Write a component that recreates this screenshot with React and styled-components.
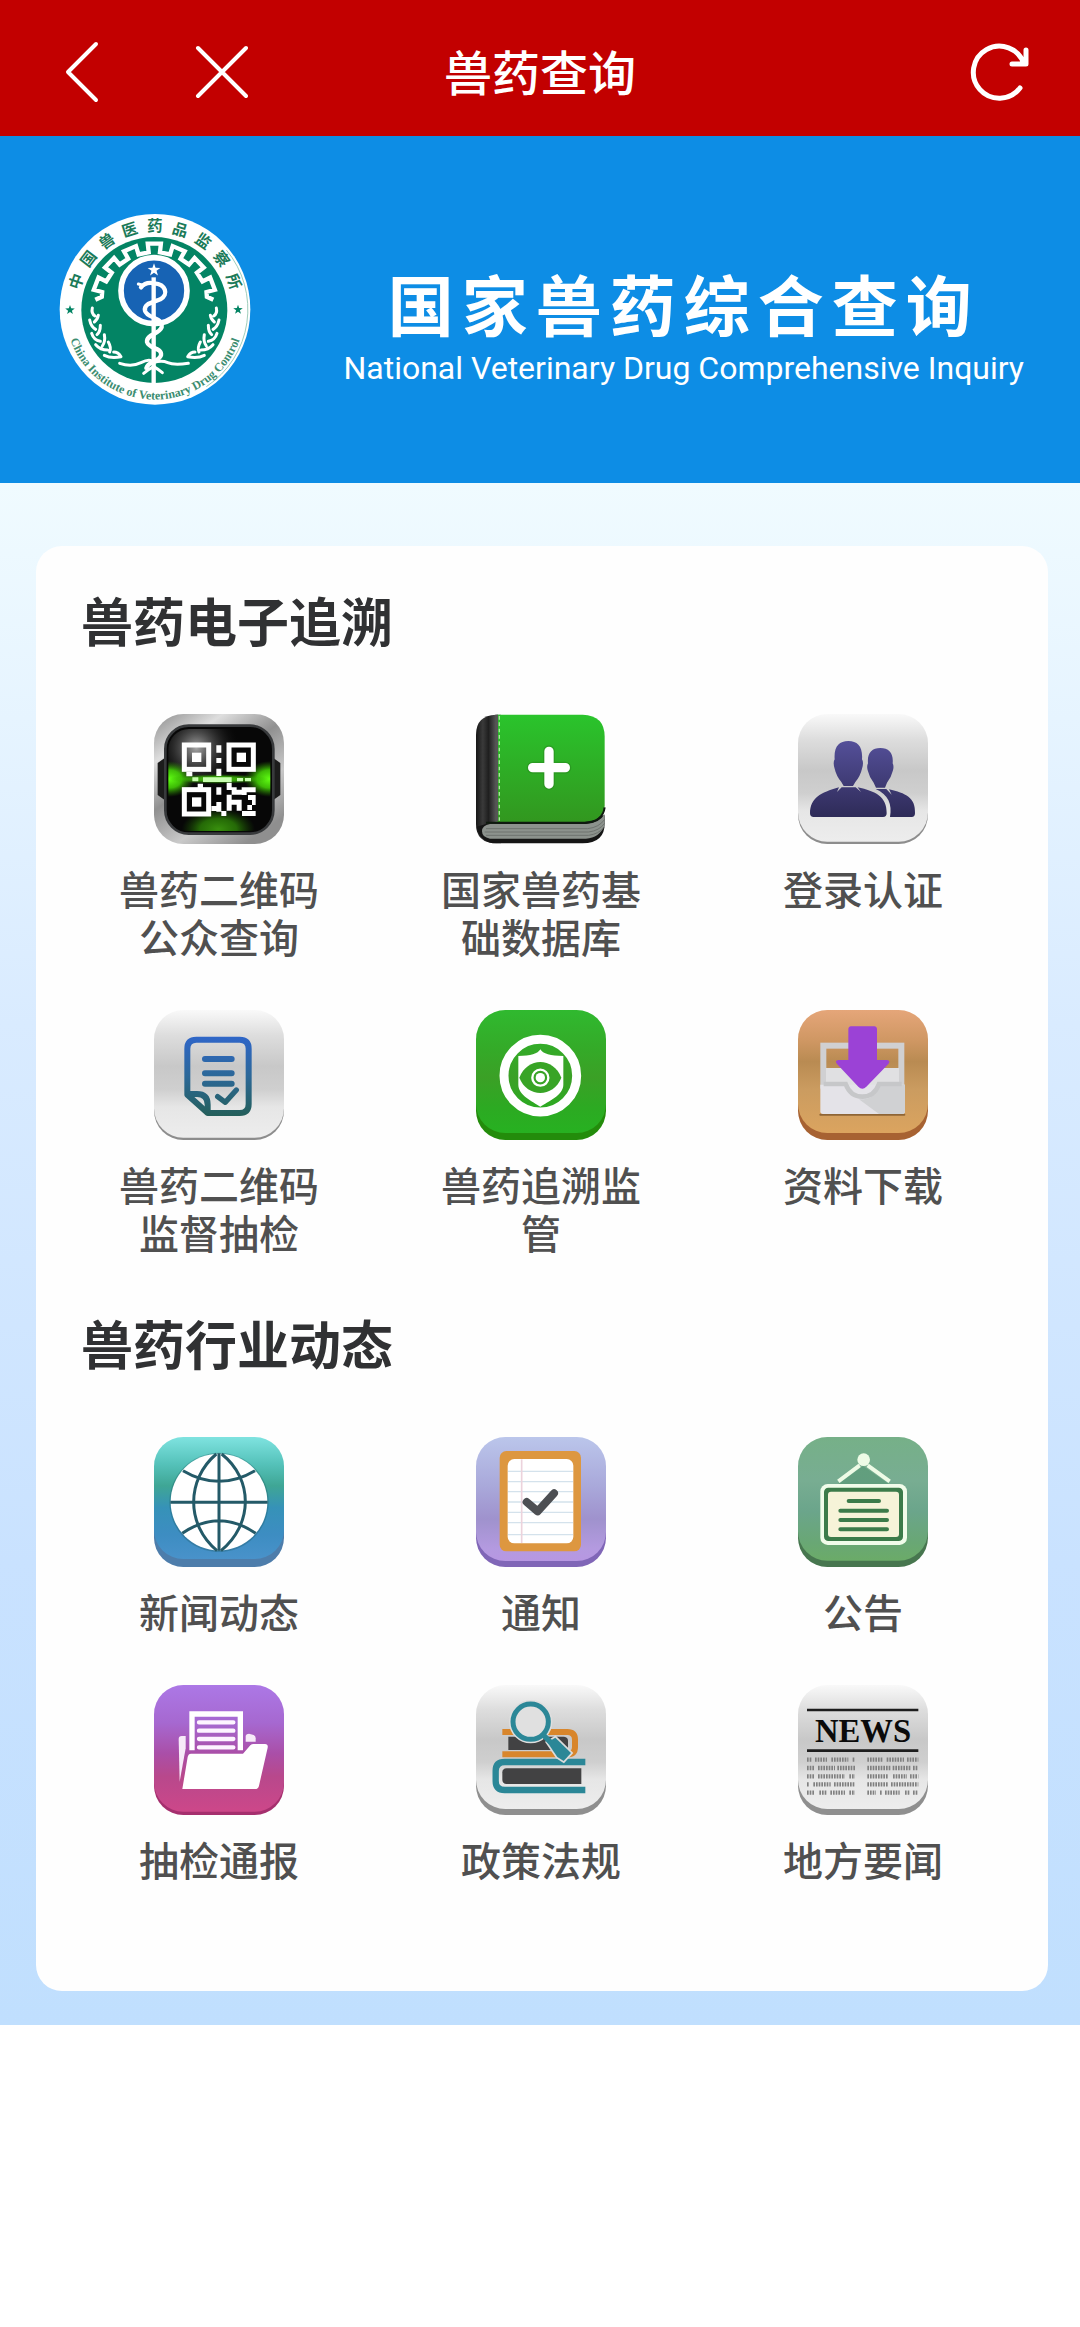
import React from 'react';
import styled, { createGlobalStyle } from 'styled-components';

const GlobalStyle = createGlobalStyle`
  *, *::before, *::after { box-sizing: border-box; }
  body {
    margin: 0;
    background: #ffffff;
    color: #505050;
    font-family: "Noto Sans CJK SC", "Noto Sans", sans-serif;
  }
`;

const TopBar = styled.header`
  display: grid;
  grid-template-columns: 1fr auto 1fr;
  align-items: center;
  height: 136px;
  padding: 8px 48px 0;
  background: #c20000;
  color: #ffffff;
`;

const BarTitle = styled.h1`
  margin: 0;
  padding-bottom: 4px;
  font-size: 48px;
  line-height: 72px;
  font-weight: 500;
`;

const BarActions = styled.div`
  display: flex;
  gap: 64px;
  justify-content: ${(p) => (p.$end ? 'flex-end' : 'flex-start')};
`;

const IconButton = styled.button`
  display: flex;
  align-items: center;
  justify-content: center;
  width: 68px;
  height: 68px;
  padding: 0;
  border: 0;
  background: none;
  color: inherit;
  cursor: pointer;
`;

const Banner = styled.section`
  display: flex;
  align-items: center;
  justify-content: space-between;
  height: 347px;
  padding: 0 56px 0 58px;
  background: #0d8de5;
  color: #ffffff;
`;

const BannerText = styled.div`
  display: flex;
  flex-direction: column;
  align-items: center;
  gap: 10px;
  padding-top: 34px;
`;

const BannerTitle = styled.h2`
  margin: 0;
  font-size: 66px;
  line-height: 72px;
  font-weight: 700;
  letter-spacing: 8px;
`;

const BannerSubtitle = styled.p`
  margin: 0;
  font-family: Roboto, "Liberation Sans", sans-serif;
  font-size: 32px;
  line-height: 40px;
`;

const Content = styled.main`
  padding: 63px 32px 34px 36px;
  background: linear-gradient(#f0fbff 0%, #d9ebff 35%, #c9e2ff 70%, #c0dffe 100%);
`;

const Card = styled.div`
  padding: 38px 24px 108px 22px;
  border-radius: 26px;
  background: #fefefe;
`;

const Section = styled.section`
  & + & { margin-top: 51px; }
`;

const SectionTitle = styled.h2`
  margin: 0 0 58px;
  padding-left: 23px;
  font-size: 52px;
  line-height: 72px;
  font-weight: 700;
  color: #303133;
`;

const Grid = styled.nav`
  display: grid;
  grid-template-columns: repeat(3, 1fr);
  row-gap: 50px;
`;

const Tile = styled.a`
  display: flex;
  flex-direction: column;
  align-items: center;
  gap: 20px;
  color: #505050;
  text-decoration: none;
`;

const TileLabel = styled.span`
  width: 210px;
  font-size: 40px;
  line-height: 48px;
  font-weight: 500;
  text-align: center;
`;

const GREY = ['#f9f9f9 0', '#dddddd .2', '#c8c8c8 .44', '#cfcfcf .62', '#e6e6e6 .76', '#ededed 1'];

function Art({ id, stops, lip, face = 370, ox, oy, children }) {
  return (
    <svg width="130" height="130" viewBox="0 0 390 390" aria-hidden="true">
      {stops && (
        <>
          <defs>
            <linearGradient id={id} x1="0" y1="0" x2="0" y2="1">
              {stops.map((s) => {
                const [color, offset] = s.split(' ');
                return <stop key={offset} offset={offset} stopColor={color} />;
              })}
            </linearGradient>
          </defs>
          <rect y="60" width="390" height="330" rx="88" fill={lip} />
          <rect width="390" height={face} rx="88" fill={`url(#${id})`} />
        </>
      )}
      <g transform={`translate(${-ox} ${-oy})`}>{children}</g>
    </svg>
  );
}

const Finder = ({ x, y }) => (
  <>
    <rect x={x + 7} y={y + 7} width="73" height="73" fill="none" stroke="#fff" strokeWidth="15" />
    <rect x={x + 30} y={y + 30} width="28" height="28" fill="#fff" />
  </>
);

const QrArt = () => (
  <Art ox={73} oy={73}>
    <defs>
      <linearGradient id="qrFrame" x1="0" y1="0" x2=".7" y2="1">
        <stop offset="0" stopColor="#8c8c8c" />
        <stop offset=".25" stopColor="#dedede" />
        <stop offset=".5" stopColor="#909090" />
        <stop offset=".75" stopColor="#c9c9c9" />
        <stop offset="1" stopColor="#8f8f8f" />
      </linearGradient>
      <radialGradient id="qrShine" cx=".28" cy=".2" r=".42">
        <stop offset="0" stopColor="#a8a8a8" />
        <stop offset="1" stopColor="#050505" stopOpacity="0" />
      </radialGradient>
      <radialGradient id="qrBeam">
        <stop offset="0" stopColor="#62ff14" />
        <stop offset=".5" stopColor="#4be806" stopOpacity=".8" />
        <stop offset="1" stopColor="#2e9c00" stopOpacity="0" />
      </radialGradient>
      <clipPath id="qrClip"><rect x="116" y="118" width="306" height="306" rx="62" /></clipPath>
    </defs>
    <rect x="73" y="73" width="390" height="390" rx="88" fill="url(#qrFrame)" />
    <path d="M104 206L84 220V316L104 330ZM432 206L452 220V316L432 330Z" fill="#1c1c1c" />
    <rect x="107" y="108" width="324" height="324" rx="70" fill="#070707" stroke="#383a3c" strokeWidth="8" />
    <g clipPath="url(#qrClip)">
      <rect x="112" y="112" width="314" height="314" fill="url(#qrShine)" />
      <ellipse cx="266" cy="418" rx="110" ry="62" fill="url(#qrBeam)" opacity=".55" />
      <ellipse cx="118" cy="268" rx="76" ry="54" fill="url(#qrBeam)" />
      <ellipse cx="420" cy="268" rx="76" ry="54" fill="url(#qrBeam)" />
      <ellipse cx="266" cy="268" rx="150" ry="15" fill="url(#qrBeam)" opacity=".8" />
    </g>
    <Finder x={157} y={159} />
    <Finder x={291} y={159} />
    <Finder x={157} y={293} />
    <path
      fill="#fff"
      d="M260 167h15v22h-15zM260 205h15v15h-15zM260 237h15v22h-15zM170 246h18v14h-18zM260 293h15v22h-15zM260 337h15v29h-15zM275 364h15v15h-15zM245 349h15v15h-15zM291 315h15v48h-15zM306 293h15v22h-15zM291 279h15v22h-15zM321 300h15v15h-15zM336 293h42v15h-27v8h-15zM306 330h30v15h-30zM321 345h15v18h-15zM355 316h23v30h-11v15h-14v-15h14v-15h-12zM337 364h41v15h-41zM204 282h16v14h-16z"
    />
    <path fill="#c8ffb0" d="M220 263h86v14h-86zM188 263h18v12h-18zM322 265h18v10h-18zM346 265h18v10h-18z" />
  </Art>
);

const BookArt = () => (
  <Art ox={50} oy={46}>
    <defs>
      <linearGradient id="bookCover" x1="0" y1="0" x2="0" y2="1">
        <stop offset="0" stopColor="#2ac42c" />
        <stop offset="1" stopColor="#32971f" />
      </linearGradient>
      <linearGradient id="bookSpine" gradientUnits="userSpaceOnUse" x1="50" y1="0" x2="118" y2="0">
        <stop offset="0" stopColor="#161616" />
        <stop offset=".3" stopColor="#3a3a3a" />
        <stop offset=".55" stopColor="#1f1f1f" />
        <stop offset="1" stopColor="#6a6a6a" />
      </linearGradient>
    </defs>
    <path d="M125 48H110Q50 50 50 108V376Q50 434 112 434H125Z" fill="url(#bookSpine)" />
    <path d="M52 384Q62 434 112 434H370Q436 434 436 374V350L80 376Z" fill="#151515" />
    <path d="M92 376H380Q420 374 436 346V380Q420 418 380 420H92Q68 416 68 398T92 376Z" fill="#8c928d" />
    <path d="M80 390H385Q420 386 436 362M76 400H388Q420 396 436 374M80 410H388Q418 406 434 386" fill="none" stroke="#6e736f" strokeWidth="3" />
    <path d="M112 48H370Q436 50 436 114V322Q430 368 376 370H112Z" fill="url(#bookCover)" />
    <path d="M80 372H376Q430 370 436 326" fill="none" stroke="#0e1a0e" strokeWidth="6" />
    <path d="M112 48V368" stroke="#555" strokeWidth="8" />
    <path d="M120 52V366" stroke="#a9e79c" strokeWidth="4" strokeDasharray="11 8" />
    <path d="M269 158V256M220 207H318" stroke="#26801c" strokeOpacity=".4" strokeWidth="36" strokeLinecap="round" />
    <path d="M269 158V256M220 207H318" stroke="#fff" strokeWidth="28" strokeLinecap="round" />
  </Art>
);

const PeopleArt = () => (
  <Art id="tPeople" stops={GREY} lip="#8d8d8d" face={383} ox={57} oy={42}>
    <defs>
      <linearGradient id="people" gradientUnits="userSpaceOnUse" x1="0" y1="120" x2="0" y2="350">
        <stop offset="0" stopColor="#55509a" />
        <stop offset="1" stopColor="#2e2b58" />
      </linearGradient>
    </defs>
    <g fill="url(#people)">
      <path d="M208 123C236 123 252 140 249 178Q255 188 249 206Q244 228 229 246L222 258H194L187 246Q172 228 167 206Q161 188 167 178C164 140 180 123 208 123Z" />
      <path d="M188 262H230L246 276L236 262C290 274 324 290 323 340Q323 351 312 351H104Q93 351 93 340C94 294 124 278 180 262L174 276Z" />
      <path d="M304 144C330 144 344 160 341 190Q346 200 341 214Q337 232 324 248L318 263H291L284 248Q271 232 267 214Q262 200 267 190C264 160 278 144 304 144Z" />
      <path d="M290 267H322L338 284L330 268C380 280 410 292 408 340Q408 351 398 351H333C340 312 328 284 290 267Z" />
    </g>
  </Art>
);

const DocArt = () => (
  <Art id="tDoc" stops={GREY} lip="#8d8d8d" face={383} ox={43} oy={60}>
    <defs>
      <linearGradient id="doc" gradientUnits="userSpaceOnUse" x1="0" y1="140" x2="0" y2="378">
        <stop offset="0" stopColor="#2f66c8" />
        <stop offset=".5" stopColor="#2c6898" />
        <stop offset="1" stopColor="#245f5a" />
      </linearGradient>
    </defs>
    <g fill="none" stroke="url(#doc)" strokeWidth="18" strokeLinejoin="round" strokeLinecap="round">
      <path d="M143 314V176Q143 149 170 149H300Q327 149 327 176V342Q327 369 300 369H204Z" />
      <path d="M146 312H172Q204 312 204 344V366" />
      <path d="M196 207L276 207.010M196 250L276 250.010M196 281L276 281.010" />
      <path d="M234 320L257 337L290 300" strokeWidth="16" />
    </g>
  </Art>
);

const ShieldArt = () => (
  <Art id="tShield" stops={['#30b92f 0', '#34aa28 .32', '#3ba026 .55', '#2caa22 .8', '#27b121 1']} lip="#238c0b" face={369} ox={1010} oy={60}>
    <circle cx="1203" cy="257" r="109" fill="none" stroke="#fff" strokeWidth="27" />
    <path d="M1203 178Q1214 198 1272 198V284C1272 316 1226 334 1203 350C1180 334 1137 316 1137 284V198Q1192 198 1203 178Z" fill="#fff" />
    <path d="M1140 263C1164 200 1242 200 1266 263C1242 324 1164 324 1140 263Z" fill="#38a426" />
    <circle cx="1203" cy="263" r="24" fill="none" stroke="#fff" strokeWidth="7" />
    <circle cx="1203" cy="263" r="14" fill="#fff" />
  </Art>
);

const DownloadArt = () => (
  <Art id="tDownload" stops={['#e5a679 0', '#cf9763 .25', '#b98b52 .42', '#cb9c60 .65', '#dba45f 1']} lip="#a76232" face={369} ox={57} oy={60}>
    <rect x="133" y="167" width="234" height="120" fill="none" stroke="#d0d0d2" strokeWidth="18" />
    <path d="M124 374H376" stroke="#8e6536" strokeWidth="6" strokeLinecap="round" />
    <path d="M141 234H360V330H141Z" fill="#e0e0e2" />
    <path d="M124 284H378V364Q378 372 370 372H132Q124 372 124 364Z" fill="#e4e3e8" />
    <path d="M240 328Q290 330 300 284H378V364Q378 372 370 372H300Z" fill="#d0d1d3" />
    <path d="M134 282H200Q214 320 250 320T300 282H368" fill="none" stroke="#c6c7c9" strokeWidth="14" />
    <path d="M216 109H286Q294 110 294 118V210H324Q336 212 328 222L262 290Q250 302 238 290L174 222Q166 212 178 210H208V118Q208 110 216 109Z" fill="#9b42d6" />
  </Art>
);

const GlobeArt = () => (
  <Art id="tGlobe" stops={['#7fe3e0 0', '#55c2ba .22', '#3fa695 .4', '#3692b8 .58', '#3d8dc2 .8', '#4992ca 1']} lip="#4d7dab" face={366} ox={73} oy={57}>
    <circle cx="268" cy="253" r="149" fill="#17545c" opacity=".3" />
    <circle cx="268" cy="252" r="145" fill="#fff" />
    <g fill="none" stroke="#245a68" strokeWidth="9">
      <path d="M268 106V398M122 253H414M160 158Q268 222 376 158M158 346Q268 270 378 346" />
      <path d="M260 108C170 184 168 320 262 398M276 108C372 184 370 320 274 398" />
    </g>
  </Art>
);

const NoteArt = () => (
  <Art id="tNote" stops={['#bbc6eb 0', '#a9a8da .4', '#9f92cd .66', '#b49ae0 .9', '#b797e2 1']} lip="#8066b7" face={372} ox={1040} oy={57}>
    <rect x="1111" y="99" width="244" height="301" rx="20" fill="#dd9740" />
    <rect x="1135" y="123" width="197" height="253" rx="20" fill="#fff" />
    <path d="M1136 160H1331M1136 191H1331M1136 221H1331M1136 252H1331M1136 283H1331M1136 314H1331M1136 350H1331" stroke="#d4e2ec" strokeWidth="4" />
    <path d="M1177 124V375" stroke="#ecd3dc" strokeWidth="5" />
    <path d="M1192 252L1225 280L1274 226" fill="none" stroke="#4d4f53" strokeWidth="24" strokeLinecap="round" strokeLinejoin="round" />
  </Art>
);

const BoardArt = () => (
  <Art id="tBoard" stops={['#76b088 0', '#78ad92 .35', '#6ba58b .6', '#69a775 .85', '#6bab68 1']} lip="#47764f" face={371} ox={57} oy={57}>
    <path d="M178 198L252 144L330 198Z" fill="#4c8f6c" opacity=".5" />
    <path d="M178 190L242 142M332 190L266 142" stroke="#eefbe6" strokeWidth="12" />
    <circle cx="254" cy="125" r="19" fill="#eefbe6" />
    <rect x="124" y="198" width="260" height="183" rx="22" fill="#f1fcea" />
    <rect x="135" y="209" width="237" height="160" rx="13" fill="#3c7b4a" />
    <rect x="147" y="221" width="213" height="136" rx="9" fill="#f6f3d8" />
    <path d="M209 249H300M184 278H324M184 306H324M184 334H324" stroke="#3c7b4a" strokeWidth="12" strokeLinecap="round" />
  </Art>
);

const FolderArt = () => (
  <Art id="tFolder" stops={['#ac78e6 0', '#a668d0 .3', '#aa4fa8 .54', '#b8488c .72', '#cd4789 1']} lip="#a52f6e" face={380} ox={73} oy={50}>
    <path d="M147 212Q147 203 156 203H168V240L150 340Z" fill="#f7eaf8" />
    <path d="M348 220V202Q350 196 358 196L372 200Q378 202 378 210V220Z" fill="#f7eaf8" />
    <path d="M187 246V137H332V246" fill="none" stroke="#fff" strokeWidth="16" />
    <path d="M208 162H311M208 187H311M208 212H311M208 237H311" stroke="#fdf3ff" strokeWidth="13" strokeLinecap="round" />
    <path d="M184 256H340L362 231Q366 227 372 227H406Q416 227 414 238L388 352Q386 362 376 362H158L174 266Q176 256 184 256Z" fill="#fff" />
  </Art>
);

const BooksArt = () => (
  <Art id="tBooks" stops={GREY} lip="#8f8f8f" face={372} ox={1040} oy={50}>
    <path d="M1119 191H1314Q1337 191 1337 214V236Q1337 258 1314 258H1119" fill="none" stroke="#d8862c" strokeWidth="18" />
    <path d="M1137 205H1304Q1316 206 1316 218V245H1137Z" fill="#424243" />
    <path d="M1368 281H1126Q1099 281 1099 308V338Q1099 365 1126 365H1368" fill="none" stroke="#2b8797" strokeWidth="19" />
    <path d="M1132 300H1356V347H1132Q1119 346 1119 334V312Q1119 301 1132 300Z" fill="#424243" />
    <path d="M1254 222L1278 208L1325 254L1303 278L1284 266Z" fill="#dcdcdc" stroke="#dcdcdc" strokeWidth="10" />
    <circle cx="1204" cy="160" r="60" fill="#dedede" stroke="#dedede" strokeWidth="10" />
    <circle cx="1204" cy="160" r="53" fill="#e0e0e0" stroke="#2b8797" strokeWidth="15" />
    <path d="M1240 198L1264 222" stroke="#2b8797" strokeWidth="16" />
    <path d="M1254 222L1278 208L1325 254L1303 278L1284 266Z" fill="#2b8797" />
  </Art>
);

const NewsArt = () => (
  <Art id="tNews" stops={GREY} lip="#8f8f8f" face={372} ox={57} oy={50}>
    <path d="M84 125H418M84 247H418" stroke="#1d1d1d" strokeWidth="8" />
    <text x="252" y="220" textAnchor="middle" fontFamily="Liberation Serif, serif" fontSize="98" fontWeight="700" fill="#0b0b0b">NEWS</text>
    <g stroke="#808080" strokeWidth="13" strokeDasharray="5 3">
      <path d="M84 274H99M108 274H144M157 274H208M221 274H228M265 274H310M323 274H375M384 274H418" />
      <path d="M84 299H108M117 299H168M175 299H228M265 299H335M341 299H394M402 299H418" />
      <path d="M84 324H108M117 324H198M211 324H228M265 324H328M342 324H384M393 324H418" />
      <path d="M84 348H91M103 348H155M165 348H228M265 348H328M336 348H418" />
      <path d="M84 373H108M121 373H145M154 373H198M211 373H228M265 373H291M303 373H310M318 373H362M378 373H394M402 373H418" />
    </g>
  </Art>
);

const rad = (deg) => (deg * Math.PI) / 180;
const onArc = (r, deg) => `${(344 + r * Math.sin(rad(deg))).toFixed(1)} ${(318 - r * Math.cos(rad(deg))).toFixed(1)}`;

const battlement = () => {
  const pts = [];
  for (let k = -3; k <= 3; k += 1) {
    const a = k * 23;
    pts.push(onArc(162, a - 6), onArc(188, a - 6), onArc(188, a + 6), onArc(162, a + 6));
  }
  return `M${onArc(178, -84)}L${onArc(160, -80)}L${pts.join('L')}L${onArc(160, 80)}L${onArc(178, 84)}`;
};

const star = (cx, cy, r) =>
  Array.from({ length: 10 }, (_, i) => {
    const q = i % 2 ? r * 0.4 : r;
    return `${(cx + q * Math.sin(rad(i * 36))).toFixed(1)},${(cy - q * Math.cos(rad(i * 36))).toFixed(1)}`;
  }).join(' ');

const Laurel = () => (
  <g fill="none" stroke="#fff" strokeWidth="9" strokeLinecap="round" strokeLinejoin="round">
    <path d="M158 324Q154 340 166 348M176 346Q174 358 164 366M150 360Q154 380 168 388M182 376Q182 396 172 404" />
    <path d="M156 400Q162 420 182 424M194 404Q198 424 188 438M168 434Q182 450 204 450M206 426Q216 444 210 456M194 466Q214 476 244 470Q236 456 222 456" />
  </g>
);

const Logo = () => (
  <svg width="194" height="191" viewBox="55 42 582 573" role="img" aria-label="中国兽医药品监察所">
    <circle cx="346" cy="328" r="286" fill="#fff" />
    <path d="M560 150A278 278 0 0 1 500 560" fill="none" stroke="#9fcdbb" strokeWidth="3" />
    <circle cx="344" cy="330" r="219" fill="#038464" />
    <path d={battlement()} fill="none" stroke="#fff" strokeWidth="13" />
    <circle cx="343" cy="272" r="99" fill="#1763b4" stroke="#fff" strokeWidth="17" />
    <polygon points={star(343, 210, 20)} fill="#fff" />
    <Laurel />
    <g transform="translate(688 0) scale(-1 1)"><Laurel /></g>
    <path d="M342 232V550" stroke="#fff" strokeWidth="13" />
    <g fill="none" stroke="#fff" strokeWidth="13" strokeLinecap="round">
      <path d="M304 262Q318 244 344 250C378 252 388 284 362 298C336 308 312 312 316 332C322 356 370 350 366 382C358 404 320 402 322 426C328 448 368 442 364 466C358 484 326 484 320 504" />
      <path d="M296 252L312 256M240 490Q276 502 304 488T342 488Q366 480 384 488T446 490M312 520Q326 508 342 500Q356 508 368 518" strokeWidth="9" />
    </g>
    <polygon points={star(91, 330, 15)} fill="#038464" />
    <polygon points={star(595, 329, 15)} fill="#038464" />
    <g fill="#1a7a58" fontSize="46" fontWeight="700" textAnchor="middle">
      {'中国兽医药品监察所'.split('').map((ch, i) => (
        <text key={ch} x="346" y="94" transform={`rotate(${(i - 4) * 17.6} 346 328)`}>{ch}</text>
      ))}
    </g>
    <path id="logoArc" d="M84 394A270 270 0 0 0 608 394" fill="none" />
    <text fill="#3b8d70" fontFamily="Liberation Serif, serif" fontSize="36" fontWeight="700" textAnchor="middle">
      <textPath href="#logoArc" startOffset="50%">China Institute of Veterinary Drug Control</textPath>
    </text>
  </svg>
);

const SECTIONS = [
  {
    title: '兽药电子追溯',
    items: [
      ['兽药二维码公众查询', QrArt],
      ['国家兽药基础数据库', BookArt],
      ['登录认证', PeopleArt],
      ['兽药二维码监督抽检', DocArt],
      ['兽药追溯监管', ShieldArt],
      ['资料下载', DownloadArt],
    ],
  },
  {
    title: '兽药行业动态',
    items: [
      ['新闻动态', GlobeArt],
      ['通知', NoteArt],
      ['公告', BoardArt],
      ['抽检通报', FolderArt],
      ['政策法规', BooksArt],
      ['地方要闻', NewsArt],
    ],
  },
];

export default function App() {
  return (
    <>
      <GlobalStyle />
      <TopBar>
        <BarActions>
          <IconButton type="button" aria-label="返回">
            <svg width="68" height="68" fill="none" stroke="currentColor" strokeWidth="4" strokeLinecap="round" strokeLinejoin="round">
              <path d="M48 6L20 34L48 62" />
            </svg>
          </IconButton>
          <IconButton type="button" aria-label="关闭">
            <svg width="68" height="68" fill="none" stroke="currentColor" strokeWidth="4" strokeLinecap="round">
              <path d="M18 10L66 58M66 10L18 58" />
            </svg>
          </IconButton>
        </BarActions>
        <BarTitle>兽药查询</BarTitle>
        <BarActions $end>
          <IconButton type="button" aria-label="刷新">
            <svg width="68" height="68" fill="none" stroke="currentColor" strokeWidth="5" strokeLinecap="round" strokeLinejoin="round">
              <path d="M56 50A26 26 0 1 1 60 26M62 12V26H48" />
            </svg>
          </IconButton>
        </BarActions>
      </TopBar>
      <Banner>
        <Logo />
        <BannerText>
          <BannerTitle>国家兽药综合查询</BannerTitle>
          <BannerSubtitle>National Veterinary Drug Comprehensive Inquiry</BannerSubtitle>
        </BannerText>
      </Banner>
      <Content>
        <Card>
          {SECTIONS.map(({ title, items }) => (
            <Section key={title}>
              <SectionTitle>{title}</SectionTitle>
              <Grid aria-label={title}>
                {items.map(([label, Picture]) => (
                  <Tile key={label} href="#">
                    <Picture />
                    <TileLabel>{label}</TileLabel>
                  </Tile>
                ))}
              </Grid>
            </Section>
          ))}
        </Card>
      </Content>
    </>
  );
}
